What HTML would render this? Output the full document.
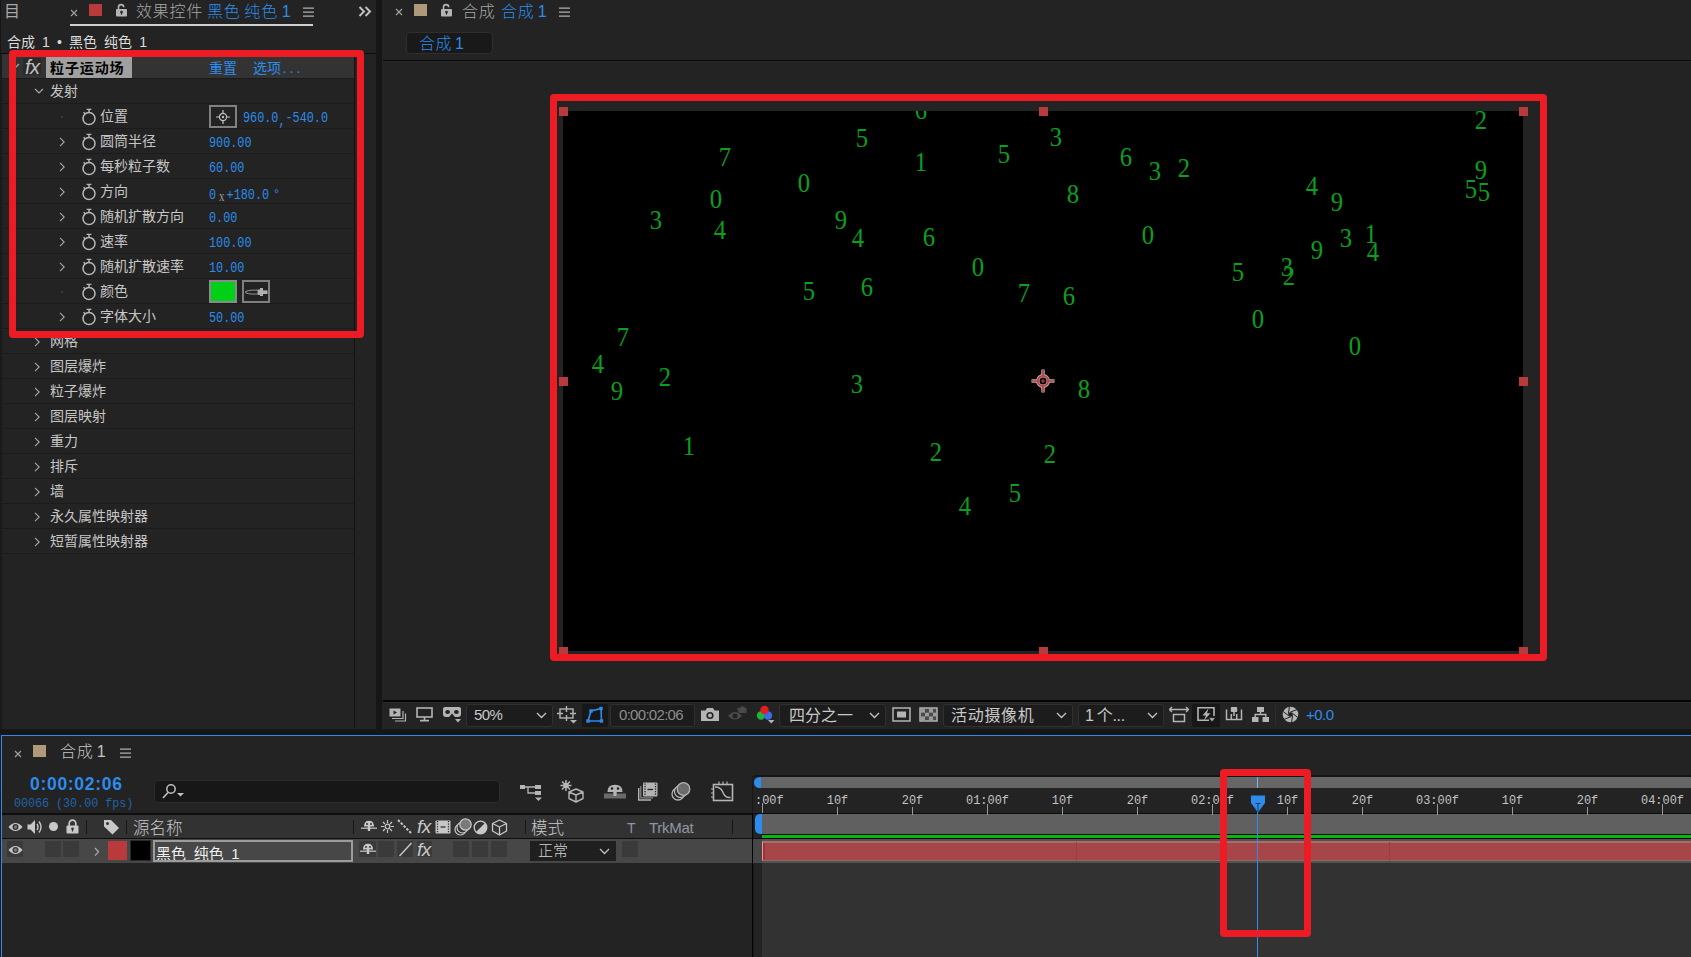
<!DOCTYPE html><html lang="zh"><head><meta charset="utf-8"><title>AE</title><style>
*{box-sizing:border-box;margin:0;padding:0}
html,body{width:1691px;height:957px;overflow:hidden;background:#161616}
body{position:relative;font-family:"Liberation Sans","Noto Sans CJK SC",sans-serif;color:#c4c4c4;font-size:14px}
.abs{position:absolute}
.panel{position:absolute;background:#232323}
.t{position:absolute;white-space:nowrap;line-height:1}
.cj{font-family:"Liberation Sans","Noto Sans CJK SC",sans-serif}
.mono{font-family:"Liberation Mono","Noto Sans CJK SC",monospace}
.blue{color:#2d8ceb}
.row{position:absolute;left:2px;width:352px;height:25px;border-bottom:1px solid #1b1b1b}
.row .lbl{position:absolute;top:4px;font-size:14px;line-height:16px;white-space:nowrap;color:#c6c6c6}
.row .val{position:absolute;left:207px;top:8px;font-size:11.8px;line-height:14px;white-space:nowrap;color:#2d8ceb;font-family:"Liberation Mono",monospace;transform:scaleY(1.25);transform-origin:0 60%}
.row .lbl.blue{color:#2d8ceb}
.chev{position:absolute;width:8px;height:10px}
.sw{position:absolute;left:79px;top:3px;width:16px;height:19px}
.redbox{position:absolute;border:7px solid #ed1c24;border-radius:4px}
.dd{position:absolute;top:704px;height:23px;background:#1c1c1c;border:1px solid #303030;border-radius:3px}
.dg{position:absolute;font-family:"Liberation Serif",serif;font-size:28px;line-height:28px;width:20px;height:28px;text-align:center;color:#0aa01e;transform:scaleX(.88)}
.h{position:absolute;width:9px;height:9px;background:#b83a3a}
.rl{position:absolute;top:794px;font-family:"Liberation Mono",monospace;font-size:11.9px;line-height:13px;color:#c4c4c4;white-space:nowrap;transform:translateX(-50%) scaleY(1.15);transform-origin:50% 0}
.tk{position:absolute;top:807px;width:1px;height:6px;background:#9a9a9a;z-index:3}
.sq{position:absolute;background:#3a3a3a}
</style></head><body>
<div class="panel" id="fxp" style="left:0;top:0;width:376px;height:729px">
<div class="abs" style="left:0;top:0;width:1px;height:729px;background:#161616"></div>
<div class="t cj" style="left:4px;top:4px;font-size:16px;color:#a9a9a9">目</div>
<svg class="abs" style="left:70px;top:9px" width="8" height="8" viewBox="0 0 8 8"><path d="M1 1L7 7M7 1L1 7" stroke="#a0a0a0" stroke-width="1.2" fill="none"/></svg>
<div class="abs" style="left:89px;top:4px;width:13px;height:12px;background:#b83a3a"></div>
<svg class="abs" style="left:115px;top:3px" width="13" height="14" viewBox="0 0 13 14"><path d="M3.5 6V4.2A2.6 2.6 0 0 1 8.7 4.2" fill="none" stroke="#b4b4b4" stroke-width="1.6"/><rect x="1" y="6" width="11" height="7.5" rx="1" fill="#b4b4b4"/><circle cx="6.5" cy="9" r="1.3" fill="#232323"/><rect x="5.9" y="9" width="1.2" height="2.6" fill="#232323"/></svg>
<div class="t cj" style="left:136px;top:4px;font-size:16px;letter-spacing:.8px;color:#a7a7a7;font-weight:300">效果控件</div>
<div class="t cj blue" style="left:207px;top:4px;font-size:16px;letter-spacing:.8px;word-spacing:-1.5px;font-weight:300">黑色 纯色 1</div>
<svg class="abs" style="left:303px;top:7px" width="11" height="10" viewBox="0 0 11 10"><path d="M0 1H11M0 5H11M0 9H11" stroke="#b0b0b0" stroke-width="1.25"/></svg>
<div class="abs" style="left:70px;top:24px;width:243px;height:2px;background:#cfcfcf"></div>
<svg class="abs" style="left:358px;top:6px" width="14" height="11" viewBox="0 0 14 11"><path d="M1.5 1L6 5.5L1.5 10M7.5 1L12 5.5L7.5 10" stroke="#c0c0c0" stroke-width="2" fill="none"/></svg>
<div class="t cj" style="left:7px;top:35px;font-size:14px;color:#dcdcdc;word-spacing:3.2px">合成 1 • 黑色 纯色 1</div>
<div class="abs" style="left:0;top:53px;width:376px;height:1px;background:#0c0c0c"></div>
<div class="abs" style="left:0;top:54px;width:2px;height:675px;background:#1a1a1a"></div>
<div class="abs" style="left:354px;top:54px;width:1px;height:674px;background:#131313"></div>
<div class="row" style="top:54px;background:#333">
<svg class="chev" style="left:8px;top:8px;width:10px;height:8px" viewBox="0 0 10 8"><path d="M1 2L5 6L9 2" stroke="#a8a8a8" stroke-width="1.2" fill="none"/></svg>
<div class="abs" style="left:21px;top:4px;width:18px;height:17px;background:#2a2a2a"></div>
<div class="t" style="left:23px;top:3px;font-size:20px;font-style:italic;color:#c0c0c0;font-family:'Liberation Sans',sans-serif;letter-spacing:-.5px">fx</div>
<div class="abs" style="left:44px;top:3px;width:86px;height:21px;background:#a0a0a0"></div>
<div class="lbl cj" style="left:48px;top:6px;color:#000;font-weight:bold;letter-spacing:.9px">粒子运动场</div>
<div class="lbl cj blue" style="left:207px;top:6px">重置</div>
<div class="lbl blue" style="left:251px;top:6px"><span class="cj">选项</span><span class="mono" style="font-size:11.7px">...</span></div>
</div>
<div class="row" style="top:79px">
<svg class="chev" style="left:32px;top:8px;width:10px;height:8px" viewBox="0 0 10 8"><path d="M1 2L5 6L9 2" stroke="#a8a8a8" stroke-width="1.2" fill="none"/></svg>
<div class="lbl cj" style="left:48px">发射</div>
</div>
<div class="row" style="top:104px">
<div class="abs" style="left:59px;top:12px;width:2px;height:2px;background:#3c3c3c"></div>
<svg class="sw" viewBox="0 0 16 19"><circle cx="8" cy="11.5" r="6" fill="none" stroke="#b8b8b8" stroke-width="1.5"/><path d="M8 5.5V2.6M5.6 2.4H10.4M2.6 5.2L4.2 6.8" stroke="#b8b8b8" stroke-width="1.4" fill="none"/></svg>
<div class="lbl cj" style="left:98px">位置</div>
<div class="abs" style="left:207px;top:1px;width:28px;height:23px;border:2px solid #808080;background:#232323"></div>
<svg class="abs" style="left:214px;top:6px" width="14" height="14" viewBox="0 0 14 14"><circle cx="7" cy="7" r="3.6" fill="none" stroke="#c0c0c0" stroke-width="1.2"/><circle cx="7" cy="7" r="1.2" fill="#c0c0c0"/><path d="M7 0V3M7 11V14M0 7H3M11 7H14" stroke="#c0c0c0" stroke-width="1.2"/></svg>
<div class="val" style="left:241px">960.0<span style="position:relative;top:2px">,</span>-540.0</div>
</div>
<div class="row" style="top:129px">
<svg class="chev" style="left:57px;top:8px" viewBox="0 0 8 10"><path d="M1 0.8L5.2 5L1 9.2" stroke="#a8a8a8" stroke-width="1.1" fill="none"/></svg>
<svg class="sw" viewBox="0 0 16 19"><circle cx="8" cy="11.5" r="6" fill="none" stroke="#b8b8b8" stroke-width="1.5"/><path d="M8 5.5V2.6M5.6 2.4H10.4M2.6 5.2L4.2 6.8" stroke="#b8b8b8" stroke-width="1.4" fill="none"/></svg>
<div class="lbl cj" style="left:98px">圆筒半径</div>
<div class="val">900.00</div>
</div>
<div class="row" style="top:154px">
<svg class="chev" style="left:57px;top:8px" viewBox="0 0 8 10"><path d="M1 0.8L5.2 5L1 9.2" stroke="#a8a8a8" stroke-width="1.1" fill="none"/></svg>
<svg class="sw" viewBox="0 0 16 19"><circle cx="8" cy="11.5" r="6" fill="none" stroke="#b8b8b8" stroke-width="1.5"/><path d="M8 5.5V2.6M5.6 2.4H10.4M2.6 5.2L4.2 6.8" stroke="#b8b8b8" stroke-width="1.4" fill="none"/></svg>
<div class="lbl cj" style="left:98px">每秒粒子数</div>
<div class="val">60.00</div>
</div>
<div class="row" style="top:179px">
<svg class="chev" style="left:57px;top:8px" viewBox="0 0 8 10"><path d="M1 0.8L5.2 5L1 9.2" stroke="#a8a8a8" stroke-width="1.1" fill="none"/></svg>
<svg class="sw" viewBox="0 0 16 19"><circle cx="8" cy="11.5" r="6" fill="none" stroke="#b8b8b8" stroke-width="1.5"/><path d="M8 5.5V2.6M5.6 2.4H10.4M2.6 5.2L4.2 6.8" stroke="#b8b8b8" stroke-width="1.4" fill="none"/></svg>
<div class="lbl cj" style="left:98px">方向</div>
<div class="val">0<span style="font-family:'Liberation Serif',serif;font-size:11px;position:relative;top:2px;color:#9a9a9a;margin:0 2px 0 3px">x</span>+180.0<span style="margin-left:4px">°</span></div>
</div>
<div class="row" style="top:204px">
<svg class="chev" style="left:57px;top:8px" viewBox="0 0 8 10"><path d="M1 0.8L5.2 5L1 9.2" stroke="#a8a8a8" stroke-width="1.1" fill="none"/></svg>
<svg class="sw" viewBox="0 0 16 19"><circle cx="8" cy="11.5" r="6" fill="none" stroke="#b8b8b8" stroke-width="1.5"/><path d="M8 5.5V2.6M5.6 2.4H10.4M2.6 5.2L4.2 6.8" stroke="#b8b8b8" stroke-width="1.4" fill="none"/></svg>
<div class="lbl cj" style="left:98px">随机扩散方向</div>
<div class="val">0.00</div>
</div>
<div class="row" style="top:229px">
<svg class="chev" style="left:57px;top:8px" viewBox="0 0 8 10"><path d="M1 0.8L5.2 5L1 9.2" stroke="#a8a8a8" stroke-width="1.1" fill="none"/></svg>
<svg class="sw" viewBox="0 0 16 19"><circle cx="8" cy="11.5" r="6" fill="none" stroke="#b8b8b8" stroke-width="1.5"/><path d="M8 5.5V2.6M5.6 2.4H10.4M2.6 5.2L4.2 6.8" stroke="#b8b8b8" stroke-width="1.4" fill="none"/></svg>
<div class="lbl cj" style="left:98px">速率</div>
<div class="val">100.00</div>
</div>
<div class="row" style="top:254px">
<svg class="chev" style="left:57px;top:8px" viewBox="0 0 8 10"><path d="M1 0.8L5.2 5L1 9.2" stroke="#a8a8a8" stroke-width="1.1" fill="none"/></svg>
<svg class="sw" viewBox="0 0 16 19"><circle cx="8" cy="11.5" r="6" fill="none" stroke="#b8b8b8" stroke-width="1.5"/><path d="M8 5.5V2.6M5.6 2.4H10.4M2.6 5.2L4.2 6.8" stroke="#b8b8b8" stroke-width="1.4" fill="none"/></svg>
<div class="lbl cj" style="left:98px">随机扩散速率</div>
<div class="val">10.00</div>
</div>
<div class="row" style="top:279px">
<div class="abs" style="left:59px;top:12px;width:2px;height:2px;background:#3c3c3c"></div>
<svg class="sw" viewBox="0 0 16 19"><circle cx="8" cy="11.5" r="6" fill="none" stroke="#b8b8b8" stroke-width="1.5"/><path d="M8 5.5V2.6M5.6 2.4H10.4M2.6 5.2L4.2 6.8" stroke="#b8b8b8" stroke-width="1.4" fill="none"/></svg>
<div class="lbl cj" style="left:98px">颜色</div>
<div class="abs" style="left:207px;top:1px;width:28px;height:23px;border:2px solid #8a8a8a;background:#00d018"></div>
<div class="abs" style="left:240px;top:1px;width:28px;height:23px;border:2px solid #808080;background:#232323"></div>
<svg class="abs" style="left:242px;top:8px" width="24" height="10" viewBox="0 0 24 10"><path d="M1 5.2C3 3.2 8 3 14 3.2V7C8 7.2 3 7 1 5.2Z" fill="none" stroke="#9a9a9a" stroke-width="1"/><rect x="14" y="2.5" width="4" height="5.4" fill="#b0b0b0"/><rect x="16" y="1" width="3" height="8" fill="#b0b0b0"/><rect x="19" y="3.4" width="4.5" height="3.6" fill="#b0b0b0"/></svg>
</div>
<div class="row" style="top:304px">
<svg class="chev" style="left:57px;top:8px" viewBox="0 0 8 10"><path d="M1 0.8L5.2 5L1 9.2" stroke="#a8a8a8" stroke-width="1.1" fill="none"/></svg>
<svg class="sw" viewBox="0 0 16 19"><circle cx="8" cy="11.5" r="6" fill="none" stroke="#b8b8b8" stroke-width="1.5"/><path d="M8 5.5V2.6M5.6 2.4H10.4M2.6 5.2L4.2 6.8" stroke="#b8b8b8" stroke-width="1.4" fill="none"/></svg>
<div class="lbl cj" style="left:98px">字体大小</div>
<div class="val">50.00</div>
</div>
<div class="row" style="top:329px">
<svg class="chev" style="left:32px;top:8px" viewBox="0 0 8 10"><path d="M1 0.8L5.2 5L1 9.2" stroke="#a8a8a8" stroke-width="1.1" fill="none"/></svg>
<div class="lbl cj" style="left:48px">网格</div>
</div>
<div class="row" style="top:354px">
<svg class="chev" style="left:32px;top:8px" viewBox="0 0 8 10"><path d="M1 0.8L5.2 5L1 9.2" stroke="#a8a8a8" stroke-width="1.1" fill="none"/></svg>
<div class="lbl cj" style="left:48px">图层爆炸</div>
</div>
<div class="row" style="top:379px">
<svg class="chev" style="left:32px;top:8px" viewBox="0 0 8 10"><path d="M1 0.8L5.2 5L1 9.2" stroke="#a8a8a8" stroke-width="1.1" fill="none"/></svg>
<div class="lbl cj" style="left:48px">粒子爆炸</div>
</div>
<div class="row" style="top:404px">
<svg class="chev" style="left:32px;top:8px" viewBox="0 0 8 10"><path d="M1 0.8L5.2 5L1 9.2" stroke="#a8a8a8" stroke-width="1.1" fill="none"/></svg>
<div class="lbl cj" style="left:48px">图层映射</div>
</div>
<div class="row" style="top:429px">
<svg class="chev" style="left:32px;top:8px" viewBox="0 0 8 10"><path d="M1 0.8L5.2 5L1 9.2" stroke="#a8a8a8" stroke-width="1.1" fill="none"/></svg>
<div class="lbl cj" style="left:48px">重力</div>
</div>
<div class="row" style="top:454px">
<svg class="chev" style="left:32px;top:8px" viewBox="0 0 8 10"><path d="M1 0.8L5.2 5L1 9.2" stroke="#a8a8a8" stroke-width="1.1" fill="none"/></svg>
<div class="lbl cj" style="left:48px">排斥</div>
</div>
<div class="row" style="top:479px">
<svg class="chev" style="left:32px;top:8px" viewBox="0 0 8 10"><path d="M1 0.8L5.2 5L1 9.2" stroke="#a8a8a8" stroke-width="1.1" fill="none"/></svg>
<div class="lbl cj" style="left:48px">墙</div>
</div>
<div class="row" style="top:504px">
<svg class="chev" style="left:32px;top:8px" viewBox="0 0 8 10"><path d="M1 0.8L5.2 5L1 9.2" stroke="#a8a8a8" stroke-width="1.1" fill="none"/></svg>
<div class="lbl cj" style="left:48px">永久属性映射器</div>
</div>
<div class="row" style="top:529px">
<svg class="chev" style="left:32px;top:8px" viewBox="0 0 8 10"><path d="M1 0.8L5.2 5L1 9.2" stroke="#a8a8a8" stroke-width="1.1" fill="none"/></svg>
<div class="lbl cj" style="left:48px">短暂属性映射器</div>
</div>
<div class="redbox" style="left:9px;top:50px;width:355px;height:288px"></div>
</div>
<div class="panel" id="comp" style="left:382px;top:0;width:1309px;height:729px">
<svg class="abs" style="left:13px;top:8px" width="8" height="8" viewBox="0 0 8 8"><path d="M1 1L7 7M7 1L1 7" stroke="#a0a0a0" stroke-width="1.2" fill="none"/></svg>
<div class="abs" style="left:32px;top:4px;width:13px;height:12px;background:#ae9a7a"></div>
<svg class="abs" style="left:58px;top:3px" width="13" height="14" viewBox="0 0 13 14"><path d="M3.5 6V4.2A2.6 2.6 0 0 1 8.7 4.2" fill="none" stroke="#b4b4b4" stroke-width="1.6"/><rect x="1" y="6" width="11" height="7.5" rx="1" fill="#b4b4b4"/><circle cx="6.5" cy="9" r="1.3" fill="#232323"/><rect x="5.9" y="9" width="1.2" height="2.6" fill="#232323"/></svg>
<div class="t cj" style="left:80px;top:4px;font-size:16px;letter-spacing:.8px;color:#a7a7a7;font-weight:300">合成</div>
<div class="t cj blue" style="left:119px;top:4px;font-size:16px;letter-spacing:.8px;word-spacing:-2px;font-weight:300">合成 1</div>
<svg class="abs" style="left:177px;top:7px" width="11" height="10" viewBox="0 0 11 10"><path d="M0 1H11M0 5H11M0 9H11" stroke="#b0b0b0" stroke-width="1.25"/></svg>
<div class="abs" style="left:24px;top:32px;width:87px;height:22px;background:#191919;border:1px solid #2e2e2e;border-radius:4px"></div>
<div class="t cj blue" style="left:37px;top:36px;font-size:16px;letter-spacing:.5px;word-spacing:-2px;font-weight:300">合成 1</div>
<div class="abs" style="left:1px;top:60px;width:1308px;height:1px;background:#0a0a0a"></div><div class="abs" style="left:1px;top:61px;width:1308px;height:1px;background:#292929"></div>
<div class="abs" id="canvas" style="left:181px;top:111px;width:960px;height:540px;background:#000;overflow:hidden">
<span class="dg" style="left:348.0px;top:-15.0px">6</span>
<span class="dg" style="left:289.0px;top:13.0px">5</span>
<span class="dg" style="left:482.7px;top:11.5px">3</span>
<span class="dg" style="left:907.5px;top:-4.7px">2</span>
<span class="dg" style="left:152.0px;top:32.0px">7</span>
<span class="dg" style="left:347.7px;top:36.5px">1</span>
<span class="dg" style="left:431.0px;top:29.0px">5</span>
<span class="dg" style="left:552.8px;top:32.0px">6</span>
<span class="dg" style="left:582.0px;top:46.0px">3</span>
<span class="dg" style="left:611.3px;top:42.8px">2</span>
<span class="dg" style="left:907.7px;top:45.3px">9</span>
<span class="dg" style="left:230.5px;top:58.0px">0</span>
<span class="dg" style="left:738.5px;top:61.0px">4</span>
<span class="dg" style="left:898.4px;top:64.3px">5</span>
<span class="dg" style="left:910.7px;top:67.0px">5</span>
<span class="dg" style="left:143.0px;top:73.5px">0</span>
<span class="dg" style="left:500.0px;top:69.0px">8</span>
<span class="dg" style="left:763.6px;top:77.0px">9</span>
<span class="dg" style="left:82.5px;top:95.0px">3</span>
<span class="dg" style="left:267.5px;top:95.0px">9</span>
<span class="dg" style="left:146.5px;top:105.0px">4</span>
<span class="dg" style="left:285.0px;top:113.0px">4</span>
<span class="dg" style="left:355.8px;top:111.7px">6</span>
<span class="dg" style="left:575.2px;top:110.0px">0</span>
<span class="dg" style="left:773.0px;top:113.0px">3</span>
<span class="dg" style="left:797.7px;top:109.0px">1</span>
<span class="dg" style="left:744.3px;top:124.6px">9</span>
<span class="dg" style="left:800.0px;top:127.4px">4</span>
<span class="dg" style="left:405.2px;top:142.2px">0</span>
<span class="dg" style="left:665.0px;top:147.0px">5</span>
<span class="dg" style="left:713.5px;top:142.0px">3</span>
<span class="dg" style="left:716.2px;top:151.0px">2</span>
<span class="dg" style="left:236.4px;top:165.8px">5</span>
<span class="dg" style="left:294.3px;top:162.3px">6</span>
<span class="dg" style="left:451.0px;top:168.0px">7</span>
<span class="dg" style="left:495.8px;top:171.0px">6</span>
<span class="dg" style="left:684.6px;top:194.3px">0</span>
<span class="dg" style="left:49.8px;top:212.4px">7</span>
<span class="dg" style="left:782.0px;top:220.9px">0</span>
<span class="dg" style="left:25.0px;top:238.7px">4</span>
<span class="dg" style="left:92.0px;top:252.4px">2</span>
<span class="dg" style="left:43.8px;top:265.7px">9</span>
<span class="dg" style="left:283.6px;top:259.0px">3</span>
<span class="dg" style="left:510.9px;top:263.6px">8</span>
<span class="dg" style="left:116.0px;top:321.0px">1</span>
<span class="dg" style="left:362.7px;top:327.3px">2</span>
<span class="dg" style="left:476.8px;top:328.8px">2</span>
<span class="dg" style="left:441.8px;top:368.0px">5</span>
<span class="dg" style="left:392.0px;top:381.2px">4</span>
</div>
<div class="h" style="left:177px;top:107px"></div>
<div class="h" style="left:177px;top:377px"></div>
<div class="h" style="left:177px;top:647px"></div>
<div class="h" style="left:657px;top:107px"></div>
<div class="h" style="left:657px;top:647px"></div>
<div class="h" style="left:1137px;top:107px"></div>
<div class="h" style="left:1137px;top:377px"></div>
<div class="h" style="left:1137px;top:647px"></div>
<svg class="abs" style="left:648px;top:368px" width="26" height="26" viewBox="0 0 26 26"><g fill="none" stroke="#d8d0d0" stroke-width="3.4" opacity=".85"><circle cx="13" cy="13" r="5.2"/><path d="M13 1.5V8M13 18V24.5M1.5 13H8M18 13H24.5"/></g><g fill="none" stroke="#c2383c" stroke-width="1.7"><circle cx="13" cy="13" r="5.2"/><path d="M13 2V8M13 18V24M2 13H8M18 13H24"/><path d="M13 11V15M11 13H15" stroke-width="1.2"/></g></svg>
<div class="redbox" style="left:168px;top:94px;width:997px;height:567px"></div>
<div class="abs" style="left:1px;top:700px;width:1308px;height:2px;background:#030303"></div><div class="abs" style="left:1px;top:702px;width:1308px;height:1px;background:#292929"></div>
<svg class="abs" style="left:7px;top:708px" width="18" height="15" viewBox="0 0 18 15"><rect x="0.5" y="0.5" width="11" height="8" fill="#b4b4b4"/><path d="M4.5 2.5L8 4.5L4.5 6.5Z" fill="#232323"/><path d="M3 10.5H14V3M6 13H16.5V5.5" stroke="#b4b4b4" stroke-width="1.2" fill="none"/></svg>
<svg class="abs" style="left:34px;top:707px" width="17" height="15" viewBox="0 0 17 15"><rect x="1" y="1" width="15" height="9" fill="none" stroke="#b4b4b4" stroke-width="1.6"/><path d="M8.5 10V13M4 13.6H13" stroke="#b4b4b4" stroke-width="1.6"/></svg>
<svg class="abs" style="left:60px;top:706px" width="20" height="17" viewBox="0 0 20 17"><path d="M1 3Q1 1 3 1H17Q19 1 19 3V8Q19 11 16 11H13L10 7.5L7 11H4Q1 11 1 8Z" fill="#b4b4b4"/><ellipse cx="5.6" cy="6" rx="2.4" ry="2.1" fill="#232323"/><ellipse cx="14.4" cy="6" rx="2.4" ry="2.1" fill="#232323"/><path d="M13 13H19L16 16.5Z" fill="#b4b4b4"/></svg>
<div class="dd" style="left:84px;width:87px"></div>
<div class="t " style="left:92px;top:707px;font-size:15px;color:#c8c8c8;letter-spacing:-.6px">50%</div>
<svg class="abs" style="left:154px;top:712px" width="11" height="7" viewBox="0 0 11 7"><path d="M1 1L5.5 5.5L10 1" stroke="#c0c0c0" stroke-width="1.4" fill="none"/></svg>
<svg class="abs" style="left:175px;top:706px" width="21" height="18" viewBox="0 0 21 18"><rect x="3" y="3" width="13" height="9" fill="none" stroke="#b4b4b4" stroke-width="1.4"/><path d="M9.5 0V6M9.5 9V15M0 7.5H6M13 7.5H19" stroke="#b4b4b4" stroke-width="1.4"/><path d="M13 14H20L16.5 17.5Z" fill="#b4b4b4"/></svg>
<div class="abs" style="left:200px;top:704px;width:26px;height:23px;background:#171717;border-radius:2px"></div>
<svg class="abs" style="left:203px;top:706px" width="20" height="18" viewBox="0 0 20 18"><path d="M3 15L6 5L16 2.5L16.5 15Z" fill="none" stroke="#2d8ceb" stroke-width="1.6"/><g fill="#2d8ceb"><rect x="1.3" y="13.3" width="3.4" height="3.4"/><rect x="4.3" y="3.3" width="3.4" height="3.4"/><rect x="14.3" y="0.8" width="3.4" height="3.4"/><rect x="14.8" y="13.3" width="3.4" height="3.4"/></g></svg>
<div class="dd" style="left:228px;width:85px"></div>
<div class="t " style="left:237px;top:707px;font-size:15px;color:#8c8c8c;letter-spacing:-.7px">0:00:02:06</div>
<svg class="abs" style="left:318px;top:707px" width="20" height="15" viewBox="0 0 20 15"><path d="M1 3.5H5.5L7 1H13L14.5 3.5H19V14H1Z" fill="#b4b4b4"/><circle cx="10" cy="8.5" r="3.6" fill="#232323"/><circle cx="10" cy="8.5" r="2" fill="#b4b4b4"/></svg>
<svg class="abs" style="left:345px;top:705px" width="20" height="18" viewBox="0 0 20 18"><path d="M1 11Q8 3 15 11Q8 18 1 11Z" fill="#4a4a4a"/><circle cx="8" cy="11" r="2.5" fill="#232323"/><path d="M10 3H13L14 1.5H17L18 3H19.5V8H12" fill="#4a4a4a"/></svg>
<svg class="abs" style="left:374px;top:705px" width="19" height="19" viewBox="0 0 19 19"><circle cx="5" cy="10.5" r="4.2" fill="#22b33a"/><circle cx="12" cy="10.5" r="4.2" fill="#3a6ee8"/><circle cx="8.5" cy="5" r="4.2" fill="#e02020"/><path d="M12 15H18.5L15.2 18.5Z" fill="#b4b4b4"/></svg>
<div class="dd" style="left:397px;width:107px"></div>
<div class="t cj" style="left:407px;top:708px;font-size:16px;color:#c8c8c8;">四分之一</div>
<svg class="abs" style="left:487px;top:712px" width="11" height="7" viewBox="0 0 11 7"><path d="M1 1L5.5 5.5L10 1" stroke="#c0c0c0" stroke-width="1.4" fill="none"/></svg>
<svg class="abs" style="left:510px;top:707px" width="19" height="15" viewBox="0 0 19 15"><rect x="1" y="1" width="17" height="13" fill="none" stroke="#b4b4b4" stroke-width="1.5"/><rect x="5" y="4.5" width="9" height="6" fill="#b4b4b4"/></svg>
<svg class="abs" style="left:537px;top:707px" width="19" height="15" viewBox="0 0 19 15"><rect x="1" y="1" width="17" height="13" fill="#4a4a4a" stroke="#b4b4b4" stroke-width="1.5"/><g fill="#9a9a9a"><rect x="2" y="2" width="4" height="3.7"/><rect x="10" y="2" width="4" height="3.7"/><rect x="6" y="5.7" width="4" height="3.7"/><rect x="14" y="5.7" width="3" height="3.7"/><rect x="2" y="9.4" width="4" height="3.7"/><rect x="10" y="9.4" width="4" height="3.7"/></g></svg>
<div class="dd" style="left:561px;width:130px"></div>
<div class="t cj" style="left:569px;top:708px;font-size:16px;color:#c8c8c8;letter-spacing:.7px">活动摄像机</div>
<svg class="abs" style="left:674px;top:712px" width="11" height="7" viewBox="0 0 11 7"><path d="M1 1L5.5 5.5L10 1" stroke="#c0c0c0" stroke-width="1.4" fill="none"/></svg>
<div class="dd" style="left:696px;width:86px"></div>
<div class="t cj" style="left:703px;top:708px;font-size:16px;color:#c8c8c8;word-spacing:-1px;letter-spacing:-.3px">1 个...</div>
<svg class="abs" style="left:765px;top:712px" width="11" height="7" viewBox="0 0 11 7"><path d="M1 1L5.5 5.5L10 1" stroke="#c0c0c0" stroke-width="1.4" fill="none"/></svg>
<svg class="abs" style="left:787px;top:706px" width="20" height="17" viewBox="0 0 20 17"><path d="M0 3.5H20M3 1L0.5 3.5L3 6M17 1L19.500 3.5L17 6" stroke="#b4b4b4" stroke-width="1.4" fill="none"/><rect x="4.5" y="8.5" width="11" height="7" fill="none" stroke="#b4b4b4" stroke-width="1.5"/></svg>
<div class="abs" style="left:810px;top:704px;width:28px;height:23px;background:#171717;border-radius:2px"></div>
<svg class="abs" style="left:815px;top:706px" width="19" height="17" viewBox="0 0 19 17"><path d="M12 14.200H1V1.800H17V10" fill="none" stroke="#b4b4b4" stroke-width="1.600"/><path d="M11.500 2.500L5.500 9.500H9L6.800 14.500L13.500 7.200H10Z" fill="#b4b4b4"/><path d="M11.500 11.800H18.500L15 15.800Z" fill="#b4b4b4" stroke="#171717" stroke-width=".7"/></svg>
<svg class="abs" style="left:843px;top:706px" width="18" height="16" viewBox="0 0 18 16"><path d="M1.500 3.500V13.500H16.500V3.500M6.300 8V13.500M11.700 8V13.500" stroke="#b4b4b4" stroke-width="1.500" fill="none"/><rect x="5.800" y="1" width="6.400" height="5" rx="1" fill="#b4b4b4"/><path d="M9 6V10" stroke="#b4b4b4" stroke-width="1.500"/></svg>
<svg class="abs" style="left:869px;top:706px" width="19" height="17" viewBox="0 0 19 17"><rect x="6" y="1" width="7" height="5" fill="#b4b4b4"/><rect x="1" y="11" width="6.500" height="5" fill="#b4b4b4"/><rect x="11.5" y="11" width="6.500" height="5" fill="#b4b4b4"/><path d="M9.5 6V8.5M4.2 11V8.5H14.800V11" stroke="#b4b4b4" stroke-width="1.4" fill="none"/></svg>
<div class="abs" style="left:893px;top:705px;width:1px;height:21px;background:#2e2e2e"></div>
<svg class="abs" style="left:900px;top:706px" width="17" height="17" viewBox="0 0 17 17"><circle cx="8.5" cy="8.5" r="7.8" fill="#b4b4b4"/><circle cx="8.5" cy="8.5" r="2.3" fill="#232323"/><path d="M8.1 6.3L14.8 3.6M10.2 7.1L15.9 11.5M10.6 9.3L9.6 16.4M8.9 10.7L2.2 13.4M6.8 9.9L1.1 5.5M6.4 7.7L7.4 0.6" stroke="#232323" stroke-width="1"/></svg>
<div class="t blue" style="left:924px;top:707px;font-size:15px;letter-spacing:-.5px">+0.0</div>
</div>
<div class="abs" style="left:1px;top:735px;width:1690px;height:222px;background:#2d8ceb"></div>
<div class="panel" id="tl" style="left:2px;top:736px;width:1689px;height:221px"></div>
<svg class="abs" style="left:14px;top:750px" width="8" height="8" viewBox="0 0 8 8"><path d="M1 1L7 7M7 1L1 7" stroke="#a0a0a0" stroke-width="1.2" fill="none"/></svg>
<div class="abs" style="left:33px;top:745px;width:13px;height:12px;background:#ae9a7a"></div>
<div class="t cj" style="left:60px;top:744px;font-size:16px;letter-spacing:.8px;word-spacing:-2px;color:#c4c4c4;font-weight:300">合成 1</div>
<svg class="abs" style="left:120px;top:748px" width="11" height="10" viewBox="0 0 11 10"><path d="M0 1H11M0 5H11M0 9H11" stroke="#b0b0b0" stroke-width="1.25"/></svg>
<div class="t blue" id="tc" style="left:30px;top:776px;font-size:17.5px;font-weight:bold;letter-spacing:.7px">0:00:02:06</div>
<div class="t mono" id="fps" style="left:14px;top:798px;font-size:11.7px;color:#2263a8;transform:scaleY(1.08);transform-origin:0 0">00066 (30.00 fps)</div>
<div class="abs" style="left:154px;top:780px;width:346px;height:23px;background:#171717;border:1px solid #2c2c2c;border-radius:4px"></div>
<svg class="abs" style="left:162px;top:783px" width="23" height="16" viewBox="0 0 23 16"><circle cx="9" cy="6" r="4.200" fill="none" stroke="#c0c0c0" stroke-width="1.5"/><path d="M6 9.500L1 15" stroke="#c0c0c0" stroke-width="1.6"/><path d="M15 10H22L18.500 13.500Z" fill="#c0c0c0"/></svg>
<svg class="abs" style="left:520px;top:784px" width="23" height="18" viewBox="0 0 23 18"><path d="M1 3H12M8 3V9H16M12 3H16" stroke="#b4b4b4" stroke-width="1.300" fill="none"/><rect x="0" y="1" width="5" height="4" fill="#b4b4b4"/><rect x="15" y="1" width="6" height="4" fill="#b4b4b4"/><rect x="15" y="7" width="6" height="4" fill="#b4b4b4"/><path d="M15 13.500H22L18.500 17Z" fill="#b4b4b4"/></svg>
<svg class="abs" style="left:560px;top:780px" width="24" height="23" viewBox="0 0 24 23"><path d="M6 0V11M0.500 5.500H11.500M2 1.500L10 9.500M10 1.500L2 9.500" stroke="#b4b4b4" stroke-width="1.500"/><circle cx="6" cy="5.500" r="2.800" fill="#b4b4b4"/><path d="M9 12L16 9L23 12V18.500L16 22L9 18.500ZM9 12L16 15L23 12M16 15V22" fill="#232323" stroke="#b4b4b4" stroke-width="1.400" stroke-linejoin="round"/></svg>
<svg class="abs" style="left:604px;top:784px" width="22" height="15" viewBox="0 0 22 15"><path d="M3.500 8Q3.500 0.800 11 0.800Q18.500 0.800 18.500 8Z" fill="#b4b4b4"/><rect x="9.500" y="7" width="3" height="5" fill="#b4b4b4"/><rect x="0" y="9.500" width="22" height="5" fill="#6a6a6a"/><circle cx="8" cy="4.500" r="1.300" fill="#232323"/><circle cx="14" cy="4.500" r="1.300" fill="#232323"/><rect x="9.500" y="8" width="3" height="4" fill="#b4b4b4"/></svg>
<svg class="abs" style="left:637px;top:782px" width="21" height="19" viewBox="0 0 21 19"><path d="M1.700 6V18H14" stroke="#b4b4b4" stroke-width="1.400" fill="none"/><path d="M3.800 4V15.800H16" stroke="#b4b4b4" stroke-width="1.200" fill="none" opacity=".7"/><rect x="6" y="0.500" width="14.500" height="14" rx="1" fill="#b4b4b4"/><path d="M8 1.500V14M18.500 1.500V14" stroke="#232323" stroke-width="1.300" stroke-dasharray="1.300 1.200"/><path d="M10.500 7.500H16" stroke="#232323" stroke-width="1.300"/></svg>
<svg class="abs" style="left:671px;top:782px" width="20" height="19" viewBox="0 0 20 19"><circle cx="7" cy="12" r="6" fill="#232323" stroke="#b4b4b4" stroke-width="1.300"/><circle cx="9.500" cy="9.500" r="6" fill="#232323" stroke="#b4b4b4" stroke-width="1.300"/><circle cx="12.500" cy="7" r="6.300" fill="#6c6c6c" stroke="#b4b4b4" stroke-width="1.300"/></svg>
<svg class="abs" style="left:711px;top:781px" width="23" height="21" viewBox="0 0 23 21"><rect x="2.500" y="3.500" width="19" height="16" fill="none" stroke="#b4b4b4" stroke-width="1.600"/><path d="M4 6Q10 6 12 11.500T19.500 16.500" stroke="#b4b4b4" stroke-width="1.400" fill="none"/><path d="M8 0.500V3M12 0.500V3M16 0.500V3M0 8H2.500M0 12H2.500M0 16H2.500" stroke="#b4b4b4" stroke-width="1.200"/></svg>
<div class="abs" style="left:2px;top:813px;width:750px;height:2px;background:#0e0e0e"></div>
<div class="abs" style="left:2px;top:815px;width:750px;height:23px;background:#323232"></div>
<div class="abs" style="left:2px;top:838px;width:750px;height:1px;background:#0e0e0e"></div>
<div class="abs" style="left:2px;top:839px;width:750px;height:24px;background:#474747"></div>
<svg class="abs" style="left:8px;top:822px" width="15" height="10" viewBox="0 0 15 10"><path d="M0.500 5Q7.500 -3 14.500 5Q7.500 13 0.500 5Z" fill="#c8c8c8"/><circle cx="7.500" cy="5" r="3" fill="#323232"/><circle cx="7.500" cy="5" r="1.700" fill="#c8c8c8" opacity=".45"/></svg>
<svg class="abs" style="left:27px;top:819px" width="16" height="16" viewBox="0 0 16 16"><path d="M0.500 5.500H3.500L8 1V15L3.500 10.500H0.500Z" fill="#c8c8c8"/><path d="M10 5Q12 8 10 11M12 2.500Q16 8 12 13.500" stroke="#c8c8c8" stroke-width="1.400" fill="none"/></svg>
<div class="abs" style="left:49px;top:822px;width:9px;height:9px;border-radius:5px;background:#c8c8c8"></div>
<svg class="abs" style="left:66px;top:819px" width="13" height="15" viewBox="0 0 13 15"><path d="M3.200 7V4.500A3.300 3.300 0 0 1 9.800 4.500V7" fill="none" stroke="#c8c8c8" stroke-width="1.700"/><rect x="0.500" y="6.500" width="12" height="8" rx="1" fill="#c8c8c8"/><circle cx="6.500" cy="9.700" r="1.300" fill="#323232"/><rect x="5.900" y="9.700" width="1.200" height="2.800" fill="#323232"/></svg>
<div class="abs" style="left:86px;top:820px;width:1px;height:14px;background:#161616"></div>
<svg class="abs" style="left:103px;top:819px" width="17" height="16" viewBox="0 0 17 16"><path d="M1 1H8L16 9L9.500 15.500L1 7.500Z" fill="#c8c8c8"/><circle cx="4.500" cy="4.500" r="1.500" fill="#323232"/></svg>
<div class="abs" style="left:126px;top:820px;width:1px;height:14px;background:#161616"></div>
<div class="t cj" style="left:133px;top:819.5px;font-size:16.500px;color:#c8c8c8;font-weight:300">源名称</div>
<div class="abs" style="left:353px;top:820px;width:1px;height:14px;background:#161616"></div>
<svg class="abs" style="left:361px;top:820px" width="16" height="12" viewBox="0 0 16 12"><path d="M3 6.500Q3 0.800 8 0.800Q13 0.800 13 6.500Z" fill="#c8c8c8"/><rect x="6.800" y="6" width="2.400" height="5" fill="#c8c8c8"/><path d="M0 8.200H16" stroke="#c8c8c8" stroke-width="1.200"/><circle cx="6" cy="4" r="1" fill="#323232"/><circle cx="10" cy="4" r="1" fill="#323232"/></svg>
<svg class="abs" style="left:381px;top:820px" width="13" height="13" viewBox="0 0 13 13"><circle cx="6.500" cy="6.500" r="2.300" fill="none" stroke="#c8c8c8" stroke-width="1.300"/><path d="M6.500 0V3M6.500 10V13M0 6.500H3M10 6.500H13M2 2L4 4M9 9L11 11M11 2L9 4M2 11L4 9" stroke="#c8c8c8" stroke-width="1.200"/></svg>
<svg class="abs" style="left:397px;top:819px" width="15" height="15" viewBox="0 0 15 15"><path d="M1 1L14 14" stroke="#c8c8c8" stroke-width="2" stroke-dasharray="2.500 1.500"/></svg>
<div class="t" style="left:417px;top:817px;font-size:19px;font-style:italic;color:#c8c8c8;letter-spacing:-.5px">fx</div>
<svg class="abs" style="left:435px;top:820px" width="16" height="14" viewBox="0 0 16 14"><rect x="0.500" y="0.500" width="15" height="13" rx="1" fill="#c8c8c8"/><path d="M2.500 1V13M13.500 1V13" stroke="#323232" stroke-width="1.300" stroke-dasharray="1.300 1.200"/><path d="M5.500 7H10.500" stroke="#323232" stroke-width="1.300"/></svg>
<svg class="abs" style="left:454px;top:818px" width="18" height="18" viewBox="0 0 18 18"><circle cx="6.500" cy="11.500" r="5.500" fill="#323232" stroke="#c8c8c8" stroke-width="1.200"/><circle cx="8.500" cy="9.500" r="5.500" fill="#323232" stroke="#c8c8c8" stroke-width="1.200"/><circle cx="11.500" cy="6.500" r="5.700" fill="#7a7a7a" stroke="#c8c8c8" stroke-width="1.200"/></svg>
<svg class="abs" style="left:473px;top:820px" width="15" height="15" viewBox="0 0 15 15"><circle cx="7.500" cy="7.500" r="6.300" fill="#c8c8c8"/><path d="M12 3A6.300 6.300 0 0 0 3 12Z" fill="#323232"/><circle cx="7.500" cy="7.500" r="6.300" fill="none" stroke="#c8c8c8" stroke-width="1.300"/></svg>
<svg class="abs" style="left:491px;top:819px" width="17" height="17" viewBox="0 0 17 17"><path d="M1.500 4.500L8.500 1L15.500 4.500V12L8.500 16L1.500 12ZM1.500 4.500L8.500 8L15.500 4.500M8.500 8V16" fill="none" stroke="#c8c8c8" stroke-width="1.300" stroke-linejoin="round"/></svg>
<div class="abs" style="left:525px;top:820px;width:1px;height:14px;background:#161616"></div>
<div class="t cj" style="left:531px;top:819.5px;font-size:16.500px;color:#c8c8c8;font-weight:300">模式</div>
<div class="t" style="left:627px;top:821px;font-size:14px;color:#8e98a4">T</div>
<div class="t" style="left:649px;top:820px;font-size:15px;color:#8e98a4;letter-spacing:-.3px">TrkMat</div>
<div class="abs" style="left:732px;top:820px;width:1px;height:14px;background:#161616"></div>
<div class="sq" style="left:7px;top:841px;width:16px;height:16px"></div>
<svg class="abs" style="left:8px;top:845px" width="15" height="10" viewBox="0 0 15 10"><path d="M0.500 5Q7.500 -3 14.500 5Q7.500 13 0.500 5Z" fill="#c8c8c8"/><circle cx="7.500" cy="5" r="3" fill="#3a3a3a"/><circle cx="7.500" cy="5" r="1.700" fill="#c8c8c8" opacity=".45"/></svg>
<div class="sq" style="left:45px;top:841px;width:16px;height:16px"></div>
<div class="sq" style="left:63px;top:841px;width:16px;height:16px"></div>
<svg class="abs" style="left:94px;top:847px" width="6" height="10" viewBox="0 0 6 10"><path d="M1 1L4.500 4.800L1 8.600" stroke="#b0b0b0" stroke-width="1.200" fill="none"/></svg>
<div class="abs" style="left:108px;top:841px;width:19px;height:19px;background:#b83a3a"></div>
<div class="abs" style="left:130px;top:840px;width:21px;height:21px;background:#000;border:1px solid #2a2a2a"></div>
<div class="abs" style="left:153px;top:840px;width:200px;height:22px;border:2px solid #9c9c9c;background:#474747;overflow:hidden"><div class="t cj" id="lname" style="left:1px;top:4px;font-size:15px;color:#f0f0f0;word-spacing:3.5px">黑色 纯色 1</div></div>
<div class="sq" style="left:359px;top:841px;width:17px;height:16px"></div>
<svg class="abs" style="left:360px;top:843px" width="16" height="12" viewBox="0 0 16 12"><path d="M3 6.500Q3 0.800 8 0.800Q13 0.800 13 6.500Z" fill="#c8c8c8"/><rect x="6.800" y="6" width="2.400" height="5" fill="#c8c8c8"/><path d="M0 8.200H16" stroke="#c8c8c8" stroke-width="1.200"/><circle cx="6" cy="4" r="1" fill="#3a3a3a"/><circle cx="10" cy="4" r="1" fill="#3a3a3a"/></svg>
<div class="sq" style="left:378px;top:841px;width:16px;height:16px"></div>
<div class="sq" style="left:397px;top:841px;width:16px;height:16px"></div>
<svg class="abs" style="left:398px;top:842px" width="15" height="15" viewBox="0 0 15 15"><path d="M1.500 14L13.500 1" stroke="#c8c8c8" stroke-width="1.400"/></svg>
<div class="sq" style="left:417px;top:841px;width:15px;height:16px"></div>
<div class="t" style="left:417px;top:840px;font-size:19px;font-style:italic;color:#c8c8c8;letter-spacing:-.5px">fx</div>
<div class="sq" style="left:453px;top:841px;width:16px;height:16px"></div>
<div class="sq" style="left:472px;top:841px;width:16px;height:16px"></div>
<div class="sq" style="left:491px;top:841px;width:16px;height:16px"></div>
<div class="abs" style="left:530px;top:841px;width:86px;height:20px;background:#1f1f1f"></div>
<div class="t cj" style="left:538px;top:843px;font-size:15px;color:#d0d0d0;font-weight:300">正常</div>
<svg class="abs" style="left:599px;top:848px" width="11" height="7" viewBox="0 0 11 7"><path d="M1 1L5.500 5.500L10 1" stroke="#c0c0c0" stroke-width="1.300" fill="none"/></svg>
<div class="sq" style="left:622px;top:841px;width:16px;height:16px"></div>
<div class="abs" style="left:752px;top:776px;width:1px;height:37px;background:#171717"></div><div class="abs" style="left:752px;top:813px;width:1px;height:144px;background:#040404"></div><div class="abs" style="left:753px;top:813px;width:1px;height:144px;background:#1c1c1c"></div>
<div class="abs" style="left:754px;top:863px;width:8px;height:94px;background:#232323"></div>
<div class="abs" style="left:762px;top:863px;width:929px;height:94px;background:#323232"></div>
<div class="abs" style="left:754px;top:775px;width:937px;height:2px;background:#151515"></div>
<div class="abs" style="left:761px;top:777px;width:930px;height:11px;background:#666"></div>
<div class="abs" style="left:754px;top:777px;width:7px;height:11px;background:#2d8ceb;border-radius:6px 0 0 6px"></div>
<div class="abs" style="left:1257px;top:777px;width:1px;height:11px;background:#7ab4f0"></div>
<div class="rl" style="left:755px;transform:scaleY(1.15)">:00f</div>
<div class="tk" style="left:762px;top:803px;height:10px"></div>
<div class="rl" style="left:837.5px">10f</div>
<div class="tk" style="left:837px;top:807px;height:8px"></div>
<div class="rl" style="left:912.5px">20f</div>
<div class="tk" style="left:912px;top:807px;height:8px"></div>
<div class="rl" style="left:987.5px">01:00f</div>
<div class="tk" style="left:987px;top:804px;height:11px"></div>
<div class="rl" style="left:1062.5px">10f</div>
<div class="tk" style="left:1062px;top:807px;height:8px"></div>
<div class="rl" style="left:1137.5px">20f</div>
<div class="tk" style="left:1137px;top:807px;height:8px"></div>
<div class="rl" style="left:1212.5px">02:00f</div>
<div class="tk" style="left:1212px;top:804px;height:11px"></div>
<div class="rl" style="left:1287.5px">10f</div>
<div class="tk" style="left:1287px;top:807px;height:8px"></div>
<div class="rl" style="left:1362.5px">20f</div>
<div class="tk" style="left:1362px;top:807px;height:8px"></div>
<div class="rl" style="left:1437.5px">03:00f</div>
<div class="tk" style="left:1437px;top:804px;height:11px"></div>
<div class="rl" style="left:1512.5px">10f</div>
<div class="tk" style="left:1512px;top:807px;height:8px"></div>
<div class="rl" style="left:1587.5px">20f</div>
<div class="tk" style="left:1587px;top:807px;height:8px"></div>
<div class="rl" style="left:1662.5px">04:00f</div>
<div class="tk" style="left:1662px;top:804px;height:11px"></div>
<div class="abs" style="left:754px;top:813px;width:937px;height:1px;background:#0c0c0c"></div>
<div class="abs" style="left:762px;top:814px;width:929px;height:20px;background:#606060"></div>
<div class="abs" style="left:755px;top:814px;width:7px;height:20px;background:#2d8ceb;border-radius:5px 0 0 5px"></div>
<div class="abs" style="left:762px;top:834px;width:929px;height:5px;background:#0a0a0a"></div>
<div class="abs" style="left:753px;top:838px;width:9px;height:1px;background:#0c0c0c"></div>
<div class="abs" style="left:762px;top:835px;width:929px;height:3px;background:#0bb412"></div>
<div class="abs" style="left:753px;top:839px;width:9px;height:24px;background:#474747"></div>
<div class="abs" style="left:762px;top:839px;width:929px;height:24px;background:#525252"></div>
<div class="abs" style="left:762px;top:841px;width:929px;height:20px;background:#a74648;border-left:1px solid #e09898;border-top:2px solid #a86e6e;border-bottom:1px solid #8a6a6a"></div>
<div class="abs" style="left:763px;top:843px;width:2px;height:17px;background:#a23236"></div>
<div class="abs" style="left:1076px;top:842px;width:1px;height:19px;background:#a03c3e"></div>
<div class="abs" style="left:1389px;top:842px;width:1px;height:19px;background:#a03c3e"></div>
<div class="abs" style="left:1257px;top:808px;width:1px;height:149px;background:#2d8ceb"></div>
<svg class="abs" style="left:1250px;top:795px" width="16" height="18" viewBox="0 0 16 18"><path d="M1 0.500H15V8L8 17.500L1 8Z" fill="#2d8ceb"/><path d="M5.500 8.500H10.500M8 8.500V17" stroke="#1a3a5a" stroke-width="1"/></svg>
<div class="redbox" style="left:1220px;top:769px;width:91px;height:168px"></div>
</body></html>
